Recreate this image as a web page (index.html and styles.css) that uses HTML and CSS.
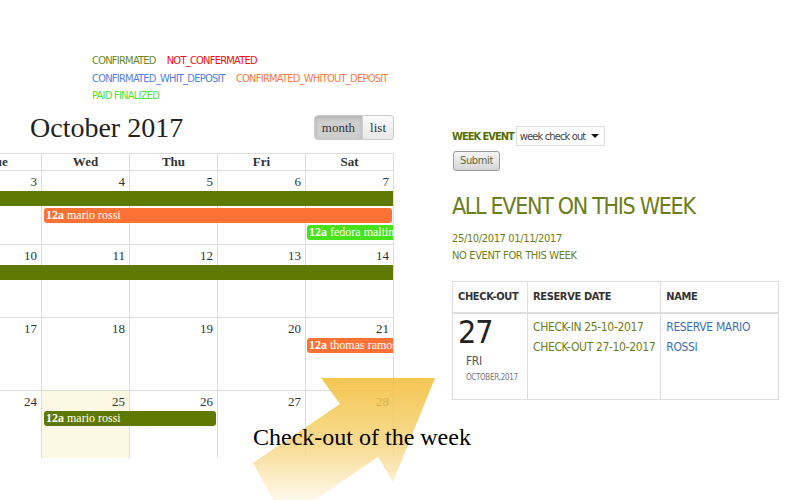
FILE: index.html
```html
<!DOCTYPE html>
<html>
<head>
<meta charset="utf-8">
<link rel="stylesheet" href="styles.css">
</head>
<body>
<div class="page">
  <div class="left">
    <div class="legend">
      <div class="lrow"><span class="c-conf">CONFIRMATED</span><span class="c-not">NOT_CONFERMATED</span></div>
      <div class="lrow"><span class="c-dep">CONFIRMATED_WHIT_DEPOSIT</span><span class="c-nodep">CONFIRMATED_WHITOUT_DEPOSIT</span></div>
      <div class="lrow"><span class="c-paid">PAID FINALIZED</span></div>
    </div>
    <div class="toolbar">
      <h2 class="title">October 2017</h2>
      <div class="btns"><span class="btn active">month</span><span class="btn">list</span></div>
    </div>
    <div class="clip">
      <div class="grid">
        <div class="head"><div>Tue</div><div>Wed</div><div>Thu</div><div>Fri</div><div>Sat</div></div>
        <div class="week first">
          <div class="cell c1">3</div><div class="cell c2">4</div><div class="cell c3">5</div><div class="cell c4">6</div><div class="cell c5">7</div>
          <div class="ev olive r2 span-all"></div>
          <div class="ev orange r3 from2to5"><b>12a</b> mario rossi</div>
          <div class="ev lime r4 only5"><b>12a</b> fedora maltin</div>
        </div>
        <div class="week">
          <div class="cell c1">10</div><div class="cell c2">11</div><div class="cell c3">12</div><div class="cell c4">13</div><div class="cell c5">14</div>
          <div class="ev olive r2 span-all"></div>
        </div>
        <div class="week">
          <div class="cell c1">17</div><div class="cell c2">18</div><div class="cell c3">19</div><div class="cell c4">20</div><div class="cell c5">21</div>
          <div class="ev orange r2 only5"><b>12a</b> thomas ramos</div>
        </div>
        <div class="week last">
          <div class="cell c1">24</div><div class="cell c2 today">25</div><div class="cell c3">26</div><div class="cell c4">27</div><div class="cell c5">28</div>
          <div class="ev olive r2 from2to3"><b>12a</b> mario rossi</div>
        </div>
      </div>
    </div>
  </div>

  <div class="right">
    <div class="form-row">
      <span class="flabel">WEEK EVENT</span>
      <div class="select"><span>week check out</span><span class="caret"></span></div>
    </div>
    <div class="submit">Submit</div>
    <h1 class="heading">ALL EVENT ON THIS WEEK</h1>
    <div class="dates">
      <div>25/10/2017 01/11/2017</div>
      <div>NO EVENT FOR THIS WEEK</div>
    </div>
    <table class="tbl">
      <thead>
        <tr><th class="w1">CHECK-OUT</th><th class="w2">RESERVE DATE</th><th>NAME</th></tr>
      </thead>
      <tbody>
        <tr>
          <td>
            <div class="big">27</div>
            <div class="dow">FRI</div>
            <div class="mon">OCTOBER,2017</div>
          </td>
          <td class="olive-t">CHECK-IN 25-10-2017<br>CHECK-OUT 27-10-2017</td>
          <td class="blue-t">RESERVE MARIO<br>ROSSI</td>
        </tr>
      </tbody>
    </table>
  </div>

  <svg class="arrow" width="800" height="500" viewBox="0 0 800 500">
    <defs>
      <linearGradient id="ag" x1="0" y1="378" x2="0" y2="500" gradientUnits="userSpaceOnUse">
        <stop offset="0" stop-color="#f3bd35"/>
        <stop offset="0.55" stop-color="#f7d680"/>
        <stop offset="1" stop-color="#fff8e8"/>
      </linearGradient>
    </defs>
    <polygon points="435,378 393,482 378,457 315,500 273,500 253,463 340,404 321,378" fill="url(#ag)"/>
  </svg>
  <div class="caption">Check-out of the week</div>
</div>
</body>
</html>
```
FILE: styles.css
```css
* { box-sizing: border-box; }
body {
  margin: 0;
  width: 800px;
  height: 500px;
  overflow: hidden;
  background: #fff;
  font-family: "DejaVu Sans Condensed", "Liberation Sans", sans-serif;
  font-size: 11px;
  letter-spacing: -0.35px;
}
.page { position: relative; display: flex; height: 500px; }
.left { width: 394px; flex: none; }

.legend { padding: 52px 0 0 92px; font-size: 11px; line-height: 17.5px; letter-spacing: -0.75px; }
.lrow { display: flex; gap: 11px; white-space: nowrap; }
.c-conf { color: #6a8a1e; }
.c-not { color: #ee1111; }
.c-dep { color: #5580e0; }
.c-nodep { color: #f47a48; }
.c-paid { color: #55e02a; }

.toolbar {
  display: flex;
  justify-content: space-between;
  align-items: center;
  padding-left: 30px;
  margin-top: 9px;
  height: 28px;
  letter-spacing: 0;
}
.title {
  margin: 0;
  font-family: "Liberation Serif", serif;
  font-weight: normal;
  font-size: 28px;
  color: #222;
}
.btns { display: flex; }
.btn {
  font-family: "Liberation Serif", serif;
  font-size: 13px;
  color: #333;
  height: 25px;
  line-height: 23px;
  padding: 0 7px;
  border: 1px solid #ccc;
  background: linear-gradient(#fbfbfb, #e8e8e8);
}
.btn:first-child { border-radius: 4px 0 0 4px; }
.btn:last-child { border-radius: 0 4px 4px 0; border-left: 0; }
.btn.active { background: #cfcfcf; box-shadow: inset 0 2px 4px rgba(0,0,0,.15); }

.clip { width: 394px; overflow: hidden; margin-top: 11px; letter-spacing: 0; }
.grid { margin-left: -46px; width: 440px; }
.head {
  display: grid;
  grid-template-columns: repeat(5, 88px);
  height: 18px;
  border-top: 1px solid #ddd;
  border-bottom: 1px solid #ddd;
}
.head div {
  text-align: center;
  font-family: "Liberation Serif", serif;
  font-weight: bold;
  font-size: 13px;
  line-height: 16px;
  color: #333;
  border-right: 1px solid #ddd;
}
.week {
  display: grid;
  grid-template-columns: repeat(5, 88px);
  grid-template-rows: 20px 17px 17px 17px 1fr;
  height: 73px;
  border-bottom: 1px solid #ddd;
}
.week.first { height: 74px; }
.week.last { height: 67px; border-bottom: 0; }
.cell {
  grid-row: 1 / -1;
  border-right: 1px solid #ddd;
  text-align: right;
  padding: 4px 4px 0 0;
  font-family: "Liberation Serif", serif;
  font-size: 13px;
  line-height: 13px;
  color: #333;
}
.c1 { grid-column: 1; }
.c2 { grid-column: 2; }
.c3 { grid-column: 3; }
.c4 { grid-column: 4; }
.c5 { grid-column: 5; }
.today { background: #fcf8e3; }

.ev {
  height: 15px;
  margin: 0 2px 2px 2px;
  border-radius: 3px;
  color: #fff;
  font-family: "Liberation Serif", serif;
  font-size: 12px;
  line-height: 15px;
  padding-left: 2px;
  white-space: nowrap;
  overflow: hidden;
  z-index: 1;
}
.r2 { grid-row: 2; }
.r3 { grid-row: 3; }
.r4 { grid-row: 4; }
.span-all { grid-column: 1 / 6; margin: 0 1px 2px 0; border-radius: 0; }
.from2to5 { grid-column: 2 / 6; }
.from2to3 { grid-column: 2 / 4; }
.only5 { grid-column: 5; margin-left: 1px; margin-right: 1px; border-radius: 3px 0 0 3px; }
.olive { background: #5f7900; }
.orange { background: #ff7236; }
.lime { background: #46e21a; }

.right { margin-left: 58px; padding-top: 126px; width: 330px; flex: none; }
.form-row { display: flex; align-items: center; height: 20px; white-space: nowrap; }
.flabel { font-weight: bold; font-size: 11px; letter-spacing: -1px; color: #557000; margin-right: 2px; }
.select {
  width: 89px;
  height: 20px;
  border: 1px solid #ddd;
  background: #fff;
  font-size: 11px;
  letter-spacing: -0.85px;
  color: #444;
  padding: 0 5px 0 3px;
  display: flex;
  align-items: center;
  justify-content: space-between;
}
.caret {
  width: 0; height: 0;
  border-left: 4px solid transparent;
  border-right: 4px solid transparent;
  border-top: 4px solid #111;
}
.submit {
  margin: 5px 0 0 1px;
  width: 47px;
  height: 20px;
  border: 1px solid #999;
  border-radius: 3px;
  background: linear-gradient(#f6f6f6, #d6d6d6);
  font-size: 11px;
  line-height: 18px;
  text-align: center;
  color: #5d6b3c;
}
.heading {
  margin: 22px 0 0 0;
  font-weight: normal;
  font-size: 23px;
  line-height: 26px;
  letter-spacing: -1.3px;
  color: #6b7e1c;
  white-space: nowrap;
}
.dates { margin-top: 11px; font-size: 11px; line-height: 17px; color: #6b7e1c; }

.tbl {
  margin-top: 17px;
  width: 327px;
  border-collapse: collapse;
  border: 1px solid #ddd;
  font-size: 11px;
}
.tbl th {
  text-align: left;
  font-weight: bold;
  color: #333;
  padding: 0 5px;
  height: 31px;
  white-space: nowrap;
  border-right: 1px solid #ddd;
  border-bottom: 2px solid #ddd;
}
.tbl .w1 { width: 75px; }
.tbl .w2 { width: 133px; }
.tbl td {
  vertical-align: top;
  padding: 3px 5px 14px 5px;
  border-right: 1px solid #ddd;
  line-height: 20px;
  font-size: 12px;
  white-space: nowrap;
}
.big { font-size: 32px; line-height: 30px; color: #222; letter-spacing: -1px; }
.dow { font-size: 12px; line-height: 16px; color: #555; margin: 6px 0 0 8px; }
.mon { font-size: 8px; line-height: 14px; color: #777; margin: 2px 0 0 8px; }
.olive-t { color: #6b7e1c; }
.blue-t { color: #3e70b0; }

.arrow { position: absolute; left: 0; top: 0; opacity: 0.85; pointer-events: none; }
.caption {
  position: absolute;
  left: 253px;
  top: 423px;
  font-family: "Liberation Serif", serif;
  font-size: 24px;
  line-height: 28px;
  letter-spacing: 0;
  color: #000;
  white-space: nowrap;
}
```
